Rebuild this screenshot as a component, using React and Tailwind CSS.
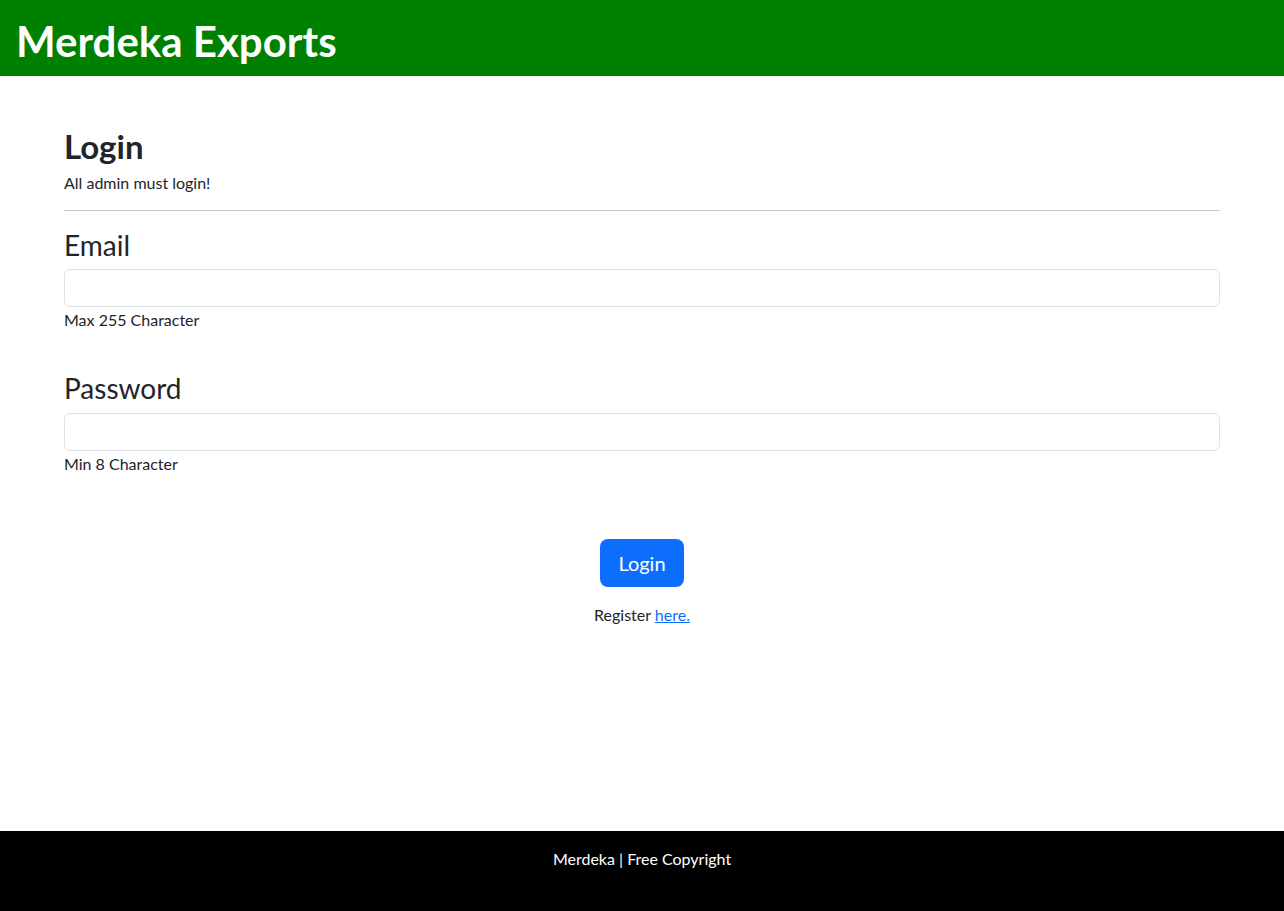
import React from 'react';

const font = { fontFamily: '"Segoe UI", Lato, "Liberation Sans", sans-serif' };

const Field = ({ label, hint, type, className }) => (
  <div className={className}>
    <label className="block text-[28px] leading-[1.2] text-[#212529] mb-[7px]">{label}</label>
    <input type={type} className="block w-full h-[38px] rounded-md border border-[#dee2e6] bg-white px-3 outline-none" />
    <div className="text-base leading-6 mt-px text-[#212529]">{hint}</div>
  </div>
);

export default function App() {
  return (
    <div className="min-h-screen flex flex-col bg-white" style={font}>
      <header className="h-[76px] bg-[#008000] flex items-center px-4 pt-[7px]">
        <h1 className="text-[42px] leading-[1.2] font-bold text-white">Merdeka Exports</h1>
      </header>

      <main className="flex-1 px-16 pt-[51px]">
        <h2 className="text-[33px] leading-[1.2] font-bold text-[#212529] mb-1">Login</h2>
        <p className="text-base leading-6 text-[#212529]">All admin must login!</p>
        <hr className="mt-[15px] mb-[18px] border-t border-[#c8c8c8]" />

        <form onSubmit={(e) => e.preventDefault()}>
          <Field label="Email" hint="Max 255 Character" type="email" />
          <Field label="Password" hint="Min 8 Character" type="password" className="mt-10" />

          <div className="mt-[63px] flex flex-col items-center">
            <button type="submit" className="h-12 px-[18px] rounded-lg bg-[#0d6efd] text-white text-xl">Login</button>
            <p className="mt-4 text-base leading-6 text-[#212529]">
              Register <a href="#" className="text-[#0d6efd] underline">here.</a>
            </p>
          </div>
        </form>
      </main>

      <footer className="h-20 bg-black pt-4 text-center text-white text-base leading-6">
        Merdeka | Free Copyright
      </footer>
    </div>
  );
}
